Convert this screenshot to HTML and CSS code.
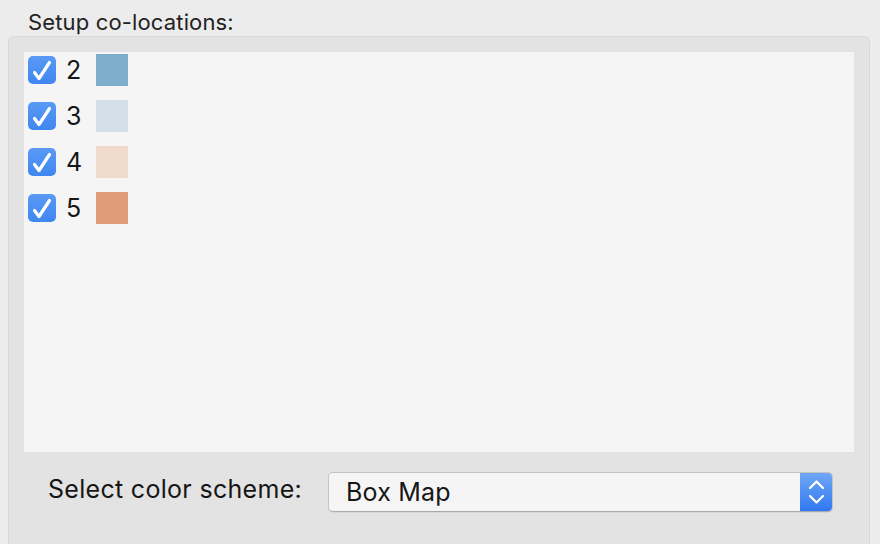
FILE: index.html
```html
<!DOCTYPE html>
<html>
<head>
<meta charset="utf-8">
<link rel="stylesheet" href="styles.css">
</head>
<body>
<div class="title">Setup co-locations:</div>
<div class="panel">
  <div class="list">
    <div class="row">
      <span class="check"><svg viewBox="0 0 28 28" width="28" height="28"><path d="M6.5 16.5 L11 22.5 L21.5 6.5" fill="none" stroke="#fff" stroke-width="3.2" stroke-linecap="round" stroke-linejoin="round"/></svg></span>
      <span class="num">2</span>
      <span class="swatch c2"></span>
    </div>
    <div class="row">
      <span class="check"><svg viewBox="0 0 28 28" width="28" height="28"><path d="M6.5 16.5 L11 22.5 L21.5 6.5" fill="none" stroke="#fff" stroke-width="3.2" stroke-linecap="round" stroke-linejoin="round"/></svg></span>
      <span class="num">3</span>
      <span class="swatch c3"></span>
    </div>
    <div class="row">
      <span class="check"><svg viewBox="0 0 28 28" width="28" height="28"><path d="M6.5 16.5 L11 22.5 L21.5 6.5" fill="none" stroke="#fff" stroke-width="3.2" stroke-linecap="round" stroke-linejoin="round"/></svg></span>
      <span class="num">4</span>
      <span class="swatch c4"></span>
    </div>
    <div class="row">
      <span class="check"><svg viewBox="0 0 28 28" width="28" height="28"><path d="M6.5 16.5 L11 22.5 L21.5 6.5" fill="none" stroke="#fff" stroke-width="3.2" stroke-linecap="round" stroke-linejoin="round"/></svg></span>
      <span class="num">5</span>
      <span class="swatch c5"></span>
    </div>
  </div>
  <div class="scheme">
    <span class="scheme-label">Select color scheme:</span>
    <div class="select">
      <span class="select-text">Box Map</span>
      <span class="select-btn"><svg viewBox="0 0 33 40" width="33" height="40"><path d="M10 16 L16.5 9.5 L23 16" fill="none" stroke="#fff" stroke-width="2.2" stroke-linecap="round" stroke-linejoin="round"/><path d="M10 24 L16.5 30.5 L23 24" fill="none" stroke="#fff" stroke-width="2.2" stroke-linecap="round" stroke-linejoin="round"/></svg></span>
    </div>
  </div>
</div>
</body>
</html>
```

FILE: styles.css
```css
html, body {
  margin: 0;
  padding: 0;
  height: 100%;
  overflow: hidden;
}
body {
  background: #ececec;
  font-family: Inter, "Liberation Sans", sans-serif;
  color: #1d1d1d;
}
.title {
  height: 36px;
  box-sizing: border-box;
  padding: 9px 0 0 28px;
  font-size: 22px;
  letter-spacing: 0.15px;
  line-height: 26px;
  color: #222;
}
.panel {
  margin: 0 10px 0 8px;
  height: 508px;
  box-sizing: border-box;
  background: #e3e3e3;
  border: 1px solid #d9d9d9;
  border-bottom: none;
  border-radius: 6px 6px 0 0;
  padding: 15px 15px 0 15px;
}
.list {
  height: 400px;
  box-sizing: border-box;
  background: #f5f5f5;
  padding: 2px 0 0 4px;
  display: flex;
  flex-direction: column;
  gap: 14px;
}
.row {
  display: flex;
  align-items: center;
  height: 32px;
}
.check {
  width: 28px;
  height: 28px;
  border-radius: 5px;
  background: linear-gradient(#5a9af5, #3f86f0);
  display: block;
}
.check svg { display: block; }
.num {
  width: 30px;
  padding-left: 10px;
  box-sizing: border-box;
  font-size: 25px;
  line-height: 28px;
  color: #161616;
  margin-right: 10px;
}
.swatch {
  width: 32px;
  height: 32px;
  display: block;
}
.c2 { background: #7eaecc; }
.c3 { background: #d3e0e9; }
.c4 { background: #f0dbcc; }
.c5 { background: #e09b78; }
.scheme {
  display: flex;
  align-items: center;
  margin-top: 20px;
  padding-left: 24px;
}
.scheme-label {
  width: 280px;
  font-size: 25px;
  letter-spacing: 0.3px;
  line-height: 28px;
  padding-bottom: 6px;
  color: #161616;
}
.select {
  width: 505px;
  height: 40px;
  box-sizing: border-box;
  display: flex;
  align-items: center;
  background: #f5f5f5;
  border: 1px solid #c4c4c4;
  border-bottom-color: #a9a9a9;
  border-radius: 5px;
  overflow: hidden;
  box-shadow: 0 1px 0 rgba(0,0,0,0.05);
}
.select-text {
  flex: 1;
  padding-left: 17px;
  font-size: 25px;
  letter-spacing: 0.2px;
  line-height: 28px;
  color: #161616;
}
.select-btn {
  width: 33px;
  height: 40px;
  margin: -1px -1px -1px 0;
  background: linear-gradient(#71a8f6, #2f77f0);
  display: block;
}
.select-btn svg { display: block; }
```
